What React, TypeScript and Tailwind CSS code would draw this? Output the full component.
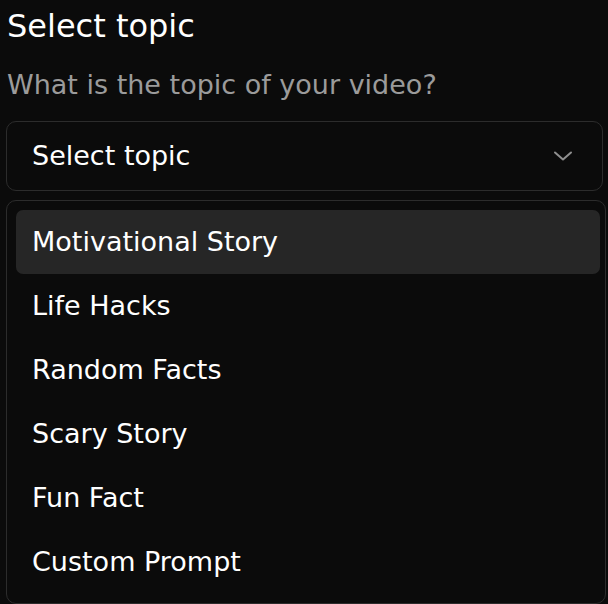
import React from "react";

const items = ["Motivational Story", "Life Hacks", "Random Facts", "Scary Story", "Fun Fact", "Custom Prompt"];

export default function App() {
  return (
    <div
      className="w-[608px] h-[604px] overflow-hidden bg-[#0b0b0b] text-white"
      style={{ fontFamily: "'DejaVu Sans', 'Noto Sans', sans-serif" }}
    >
      <div className="pl-[6px] pt-[6px] flex flex-col">
        <h1 className="text-[32px] leading-[40px] font-normal text-white pl-[1px]">Select topic</h1>
        <p className="mt-[23px] text-[27px] leading-[32px] text-[#9b9b9b] pl-[1px]">What is the topic of your video?</p>
        <button className="mt-[20px] w-[597px] h-[70px] rounded-[10px] border border-[#2c2c2c] flex items-center justify-between pl-[25px] pr-[29px] text-[27px] text-white">
          <span>Select topic</span>
          <svg width="20" height="10" viewBox="0 0 20 10" fill="none" stroke="#8f8f8f" strokeWidth="2" strokeLinecap="round" strokeLinejoin="round">
            <path d="M2 1.5 L10 8.5 L18 1.5" />
          </svg>
        </button>
        <div className="mt-[9px] w-[600px] rounded-[10px] border border-[#2c2c2c] pl-[9px] pr-[5px] py-[9px] flex flex-col">
          {items.map((it, i) => (
            <div
              key={it}
              className={`h-[64px] flex items-center pl-[16px] rounded-[7px] text-[27px] text-white ${i === 0 ? "bg-[#262626]" : ""}`}
            >
              {it}
            </div>
          ))}
        </div>
      </div>
    </div>
  );
}
